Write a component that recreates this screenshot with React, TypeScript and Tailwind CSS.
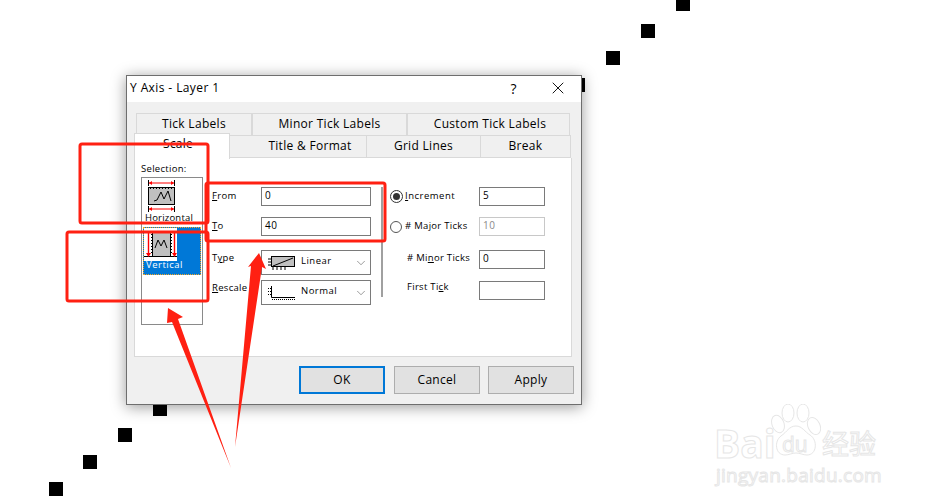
import type { ReactNode } from "react";
import { ChevronDown, X } from "lucide-react";

const FONT = "font-['Open_Sans','Liberation_Sans',sans-serif]";

const TOP_TABS = [
  { label: "Tick Labels", w: "w-[116px]" },
  { label: "Minor Tick Labels", w: "w-[155px]" },
  { label: "Custom Tick Labels", w: "w-[163px] pl-[3px]" },
];

const BOTTOM_TABS = [
  { label: "Title & Format", w: "w-[137px] pl-[24px]" },
  { label: "Grid Lines", w: "w-[114px]" },
  { label: "Break", w: "w-[90px]" },
];

// black data points of the plot behind the dialog
const POINTS = [
  { x: 676, y: -3 },
  { x: 641, y: 24 },
  { x: 606, y: 51 },
  { x: 571, y: 78 },
  { x: 153, y: 402 },
  { x: 118, y: 428 },
  { x: 83, y: 455 },
  { x: 49, y: 482 },
];

function TextBox({ value, disabled }: { value?: string; disabled?: boolean }) {
  return (
    <div
      className={`h-[19px] w-full border pl-[3px] text-[10px] leading-[15px] tracking-[0.5px] ${
        disabled ? "border-[#c8c8c8] text-[#8a8a8a]" : "border-[#7a7a7a] text-black"
      }`}
    >
      {value}
    </div>
  );
}

function Row({ children }: { children: ReactNode }) {
  return <div className="flex items-center text-[9.5px] tracking-[0.3px] text-black">{children}</div>;
}

function HorizontalIcon() {
  return (
    <svg width="27" height="32" viewBox="0 0 27 32" className="block">
      <path d="M0.5 0v6M26.5 0v6M0.5 26v6M26.5 26v6" stroke="#000" />
      <path d="M1 3h25M1 29h25" stroke="#f00" />
      <path d="M1 3l3-2v4zM26 3l-3-2v4zM1 29l3-2v4zM26 29l-3-2v4z" fill="#f00" />
      <rect x="0.5" y="7.5" width="26" height="17" fill="#c0c0c0" stroke="#000" />
      <path d="M6 21l3-1 4-8 3 7 4-8 3 10" fill="none" stroke="#000" />
      <path d="M2 8.5h24" stroke="#000" strokeDasharray="1 2" />
    </svg>
  );
}

function VerticalIcon() {
  return (
    <svg width="33" height="33" viewBox="0 0 33 33" className="block">
      <rect width="33" height="33" fill="#fff" />
      <path d="M0 3.5h33M0 28.5h33" stroke="#000" />
      <rect x="8.5" y="3.5" width="18" height="25" fill="#c0c0c0" stroke="#000" />
      <path d="M11 20l3-8 3 6 3-6 3 8" fill="none" stroke="#000" />
      <path d="M4.5 5v21M30.5 5v21" stroke="#f00" strokeWidth="1.4" />
      <path d="M2 25h5l-2.5 4zM28 25h5l-2.5 4z" fill="#f00" />
      <path d="M7.5 6v20M27.5 6v20" stroke="#000" strokeDasharray="1 2" />
    </svg>
  );
}

function LinearIcon() {
  return (
    <svg width="27" height="14" viewBox="0 0 27 14" className="shrink-0">
      <rect x="3.5" y="0.5" width="23" height="10" fill="#c0c0c0" stroke="#000" />
      <path d="M5 10L25 2" stroke="#000" />
      <path d="M0 3h3M0 6h3M0 9h3" stroke="#000" />
      <path d="M5 11v3M9 11v3M13 11v3M17 11v3" stroke="#000" />
    </svg>
  );
}

function NormalIcon() {
  return (
    <svg width="27" height="14" viewBox="0 0 27 14" className="shrink-0">
      <path d="M3.5 0v11.5H27" fill="none" stroke="#000" />
      <path d="M0 2.5h3M0 5.5h3M0 8.5h3M4 13.5h23" stroke="#000" strokeDasharray="1 1" />
    </svg>
  );
}

function Combo({ icon, label }: { icon: ReactNode; label: string }) {
  return (
    <div className="flex h-[25px] w-full items-center border border-[#7a7a7a] pl-[6px] pr-[2px] text-[9.5px] tracking-[0.5px]">
      {icon}
      <span className="ml-[6px] flex-1 pb-[2px]">{label}</span>
      <ChevronDown size={14} strokeWidth={1} className="text-[#555]" />
    </div>
  );
}

function Button({ label, primary, className }: { label: string; primary?: boolean; className?: string }) {
  return (
    <div
      className={`flex h-[28px] w-[86px] items-center justify-center bg-[#e1e1e1] pb-[1px] text-[12px] tracking-[0.3px] ${
        primary ? "border-2 border-[#0078d7]" : "border border-[#adadad]"
      } ${className ?? ""}`}
    >
      {label}
    </div>
  );
}

function Dialog() {
  return (
    <div className="absolute isolate left-[126px] top-[75px] flex h-[330px] w-[456px] flex-col border border-[#6e6e6e] bg-[#f0f0f0] shadow-[0_2px_14px_rgba(0,0,0,0.4)]">
      <div className="flex h-[26px] items-center justify-between bg-white pb-[2px] pl-[3px] pr-[13px] text-[12px] tracking-[0.4px]">
        <span>Y Axis - Layer 1</span>
        <div className="flex items-center gap-[31px]">
          <span className="text-[14px]">?</span>
          <X size={20} strokeWidth={1.1} />
        </div>
      </div>

      {/* tabs */}
      <div className="ml-[9px] mt-[11px] flex h-[22px]">
        {TOP_TABS.map((t) => (
          <div
            key={t.label}
            className={`${t.w} flex items-center justify-center border border-b-0 border-[#d9d9d9] bg-[#f0f0f0] pb-[2px] text-[12px] tracking-[0.3px]`}
          >
            {t.label}
          </div>
        ))}
      </div>
      <div className="relative ml-[7px] flex h-[23px]">
        <div className="z-10 -mt-[2px] h-[26px] w-[96px] border border-b-0 border-[#d9d9d9] bg-white pr-[8px] text-center text-[12px] leading-[20px] tracking-[0.2px]">
          Scale
        </div>
        {BOTTOM_TABS.map((t) => (
          <div
            key={t.label}
            className={`${t.w} flex items-center justify-center border border-l-0 border-[#d9d9d9] bg-[#f0f0f0] pb-[2px] text-[12px] tracking-[0.3px]`}
          >
            {t.label}
          </div>
        ))}
      </div>

      {/* Scale page */}
      <div className="ml-[7px] flex h-[199px] w-[438px] border border-t-0 border-[#d9d9d9] bg-white pl-[6px]">
        <div className="flex w-[71px] flex-col">
          <div className="mt-[4px] h-[15px] text-[9.5px] leading-[14px] tracking-[0.3px]">Selection:</div>
          <div className="h-[148px] w-[62px] border border-[#8a8a8a] p-[1px]">
            <div className="flex h-[48px] flex-col pt-[1px]">
              <div className="pl-[5px]">
                <HorizontalIcon />
              </div>
              <span className="pl-[2px] text-[9.5px] leading-[11px] tracking-[0.2px]">Horizontal</span>
            </div>
            <div className="h-[48px] border border-dotted border-[#f5a623] bg-[#0078d7]">
              <VerticalIcon />
              <div className="-mt-[2px] pl-[2px] text-[9.5px] leading-[11px] tracking-[0.5px] text-white">Vertical</div>
            </div>
          </div>
        </div>

        <div className="flex w-[169px] flex-col pt-[29px]">
          <Row>
            <span className="w-[49px]"><u>F</u>rom</span>
            <div className="w-[110px]"><TextBox value="0" /></div>
          </Row>
          <div className="mt-[11px]">
            <Row>
              <span className="w-[49px]"><u>T</u>o</span>
              <div className="w-[110px]"><TextBox value="40" /></div>
            </Row>
          </div>
          <div className="mt-[14px]">
            <Row>
              <span className="w-[49px] pb-[8px]">T<u>y</u>pe</span>
              <div className="w-[110px]"><Combo icon={<LinearIcon />} label="Linear" /></div>
            </Row>
          </div>
          <div className="mt-[5px]">
            <Row>
              <span className="w-[49px] pb-[8px]"><u>R</u>escale</span>
              <div className="w-[110px]"><Combo icon={<NormalIcon />} label="Normal" /></div>
            </Row>
          </div>
        </div>

        <div className="mt-[29px] h-[110px] w-[2px] bg-[#a0a0a0]" />

        <div className="ml-[7px] flex w-[155px] flex-col pt-[29px]">
          <Row>
            <span className="flex w-[89px] items-center">
              <span className="mr-[2px] flex h-[13px] w-[13px] items-center justify-center rounded-full border border-[#333]">
                <span className="h-[7px] w-[7px] rounded-full bg-[#333]" />
              </span>
              <span className="tracking-[0.5px]"><u>I</u>ncrement</span>
            </span>
            <div className="w-[66px]"><TextBox value="5" /></div>
          </Row>
          <div className="mt-[11px]">
            <Row>
              <span className="flex w-[89px] items-center">
                <span className="mr-[3px] h-[12px] w-[12px] rounded-full border border-[#555]" />
                <span># Major Ticks</span>
              </span>
              <div className="w-[66px]"><TextBox value="10" disabled /></div>
            </Row>
          </div>
          <div className="mt-[14px]">
            <Row>
              <span className="w-[89px] pb-[2px] pl-[17px]"># Mi<u>n</u>or Ticks</span>
              <div className="w-[66px]"><TextBox value="0" /></div>
            </Row>
          </div>
          <div className="mt-[11px]">
            <Row>
              <span className="w-[89px] pb-[6px] pl-[17px]">First Ti<u>c</u>k</span>
              <div className="w-[66px]"><TextBox /></div>
            </Row>
          </div>
        </div>
      </div>

      <div className="mt-[9px] flex justify-end pr-[7px]">
        <Button label="OK" primary className="mr-[9px]" />
        <Button label="Cancel" className="mr-[8px]" />
        <Button label="Apply" />
      </div>
    </div>
  );
}

function Annotations() {
  return (
    <svg width="931" height="504" viewBox="0 0 931 504" className="absolute inset-0" fill="none">
      <g stroke="#ff2012" strokeWidth="3" strokeLinejoin="round">
        <rect x="80" y="144" width="128" height="79" rx="2" />
        <rect x="67" y="232" width="141" height="69" rx="2" />
        <rect x="206" y="183" width="179" height="58" rx="2" />
      </g>
      <g fill="#ff2012">
        <path d="M168 308L183 317L178 319L231 468L172 322L167 323Z" />
        <path d="M259 253L266 269L262 267L235 447L251 266L248 267Z" />
      </g>
    </svg>
  );
}

function Watermark() {
  return (
    <div className="absolute left-[714px] top-[403px] h-[90px] w-[170px] text-transparent [-webkit-text-stroke:1px_#e6e6e6]">
      <span className="absolute left-0 top-[21px] text-[39px] font-bold leading-[38px]">Bai</span>
      <span className="absolute left-[108px] top-[24px] font-['Noto_Sans_CJK_SC',sans-serif] text-[27px] leading-[32px]">经验</span>
      <span className="absolute left-[2px] top-[60px] whitespace-nowrap text-[19px] leading-[24px] tracking-[0.25px]">jingyan.baidu.com</span>
      <svg width="50" height="54" viewBox="0 0 50 54" className="absolute left-[57px] top-[1px]" fill="#fff" stroke="#e6e6e6">
        <ellipse cx="7" cy="20" rx="6" ry="9" transform="rotate(-20 7 20)" />
        <ellipse cx="17" cy="9" rx="6" ry="9" />
        <ellipse cx="32" cy="9" rx="6" ry="9" />
        <ellipse cx="43" cy="22" rx="6" ry="9" transform="rotate(-25 43 22)" />
        <path d="M25 22c6 0 9 6 14 9 8 5 7 20-3 20-4 0-7-2-11-2s-7 2-11 2c-10 0-11-14-4-19 6-4 8-10 15-10z" />
      </svg>
      <span className="absolute left-[68px] top-[28px] text-[21px] leading-[26px]">du</span>
    </div>
  );
}

export default function App() {
  return (
    <div className={`relative h-[504px] w-[931px] overflow-hidden bg-white text-black ${FONT}`}>
      {POINTS.map((p) => (
        <div key={p.x} className="absolute h-[14px] w-[14px] bg-black" style={{ left: p.x, top: p.y }} />
      ))}
      <Watermark />
      <Dialog />
      <Annotations />
    </div>
  );
}
